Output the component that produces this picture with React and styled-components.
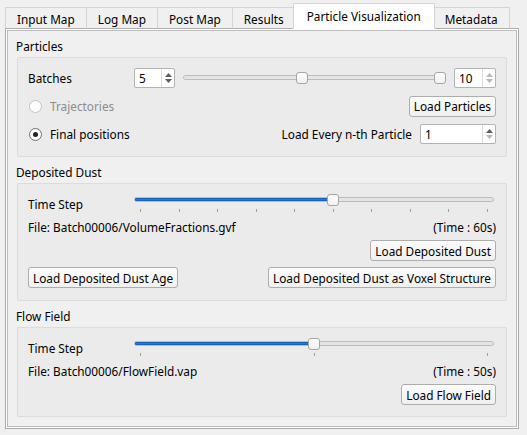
import styled, { createGlobalStyle } from "styled-components";

const GlobalStyle = createGlobalStyle`
  html, body {
    margin: 0;
    padding: 0;
    background: #f0f0f0;
  }
  body {
    font-family: "Noto Sans", "Open Sans", sans-serif;
    font-size: 11.8px;
    color: #000;
  }
`;

const tabs = [
  "Input Map",
  "Log Map",
  "Post Map",
  "Results",
  "Particle Visualization",
  "Metadata",
];

const Window = styled.div`
  width: 527px;
  height: 435px;
  box-sizing: border-box;
  padding: 3px 8px 6px 5px;
  display: flex;
  flex-direction: column;
  background: #f0f0f0;
`;

const TabBar = styled.div`
  display: flex;
  align-items: flex-end;
  height: 25px;
  position: relative;
  z-index: 1;
`;

const Tab = styled.div`
  box-sizing: border-box;
  height: ${({ $active }) => ($active ? 26 : 22)}px;
  margin: 0 ${({ $active }) => ($active ? -2 : -1)}px -1px
    ${({ $active }) => ($active ? -2 : 0)}px;
  padding: ${({ $active }) => ($active ? "0 13px 1px" : "1px 11px 0")};
  border: 1px solid #d4d4d4;
  border-bottom-color: ${({ $active }) => ($active ? "#fff" : "#adadad")};
  background: ${({ $active }) => ($active ? "#fff" : "#f0f0f0")};
  display: flex;
  align-items: center;
  white-space: nowrap;
  position: relative;
  z-index: ${({ $active }) => ($active ? 2 : 1)};
`;

const Pane = styled.div`
  flex: 1;
  display: flex;
  border: 1px solid #adadad;
  background: #fff;
  padding: 1px;
`;

const Frame = styled.div`
  flex: 1;
  display: flex;
  flex-direction: column;
  gap: 7px;
  border: 1px solid #bdbdbd;
  background: #f0f0f0;
  padding: 7px 9px 0;
`;

const Group = styled.section`
  display: flex;
  flex-direction: column;
`;

const GroupTitle = styled.div`
  height: 17px;
  line-height: 17px;
  margin: 0 0 2px -1px;
`;

const GroupFrame = styled.div`
  display: grid;
  grid-template-columns: 106px 1fr;
  row-gap: ${({ $rowGap }) => $rowGap}px;
  border: 1px solid #dcdcdc;
  border-radius: 2px;
  background: #ebebeb;
  padding: 10px 10px ${({ $bottom }) => $bottom}px;
`;

const Row = styled.div`
  grid-column: 1 / -1;
  display: flex;
  align-items: center;
  justify-content: ${({ $justify }) => $justify || "flex-start"};
  gap: 8px;
  height: ${({ $h }) => $h}px;
`;

const Label = styled.span`
  white-space: nowrap;
  align-self: center;
`;

const FieldLabel = styled.span`
  white-space: nowrap;
  align-self: start;
  margin-top: 2px;
`;

const SpinBox = styled.div`
  box-sizing: border-box;
  width: ${({ $width }) => $width}px;
  height: 20px;
  display: flex;
  flex: none;
  border: 1px solid #b3b3b3;
  border-radius: 2px;
  background: #fff;
`;

const SpinValue = styled.span`
  flex: 1;
  padding-left: 4px;
  line-height: 18px;
`;

const SpinArrows = styled.div`
  width: 12px;
  border-left: 1px solid #dcdcdc;
  display: flex;
  flex-direction: column;
  align-items: center;
  justify-content: center;
  gap: 2px;
`;

const Arrow = ({ down, dim }) => (
  <svg width="7" height="4" viewBox="0 0 7 4">
    <path
      d={down ? "M0 0h7L3.5 4z" : "M3.5 0L7 4H0z"}
      fill={dim ? "#b8b8b8" : "#5c5c5c"}
    />
  </svg>
);

const Spin = ({ width, value, upDim, downDim }) => (
  <SpinBox $width={width}>
    <SpinValue>{value}</SpinValue>
    <SpinArrows>
      <Arrow dim={upDim} />
      <Arrow down dim={downDim} />
    </SpinArrows>
  </SpinBox>
);

const SliderBox = styled.div`
  position: relative;
  flex: 1;
  align-self: stretch;
  margin-right: ${({ $right }) => $right || 0}px;
`;

const Groove = styled.div`
  box-sizing: border-box;
  height: 5px;
  margin-top: ${({ $top }) => $top}px;
  border: 1px solid #bcbcbc;
  border-radius: 3px;
  background: #e4e4e4;
  position: relative;
  overflow: hidden;
`;

const Fill = styled.div`
  position: absolute;
  left: 0;
  top: 0;
  bottom: 0;
  background: #1f7ad3;
  box-shadow: inset 0 0 0 1px #1665b4;
`;

const Handle = styled.div`
  position: absolute;
  top: ${({ $top }) => $top}px;
  box-sizing: border-box;
  width: 12px;
  height: 12px;
  border: 1px solid #a6a6a6;
  border-radius: 3px;
  background: linear-gradient(#fdfdfd, #f1f1f1);
`;

const Ticks = styled.div`
  display: flex;
  justify-content: space-between;
  padding: 0 6px;
  margin-top: 7px;
`;

const Tick = styled.span`
  width: 1px;
  height: 3px;
  background: #a0a0a0;
`;

const handleLeft = (f) => `calc((100% - 12px) * ${f})`;

const TimeSlider = ({ ticks, value }) => {
  const f = value / (ticks - 1);
  return (
    <SliderBox $right={2}>
      <Groove $top={3}>
        <Fill style={{ width: `calc((100% - 12px) * ${f} + 6px)` }} />
      </Groove>
      <Handle $top={0} style={{ left: handleLeft(f) }} />
      <Ticks>
        {Array.from({ length: ticks }, (_, i) => (
          <Tick key={i} />
        ))}
      </Ticks>
    </SliderBox>
  );
};

const RangeSlider = ({ low, high }) => (
  <SliderBox>
    <Groove $top={7} />
    <Handle $top={4} style={{ left: handleLeft(low) }} />
    <Handle $top={4} style={{ left: handleLeft(high) }} />
  </SliderBox>
);

const RadioItem = styled.label`
  display: flex;
  align-items: center;
  gap: 8px;
  margin-left: 1px;
  color: ${({ $disabled }) => ($disabled ? "#8b8b8b" : "#000")};
`;

const RadioCircle = styled.span`
  box-sizing: border-box;
  width: 13px;
  height: 13px;
  border-radius: 50%;
  border: 1px solid ${({ $disabled }) => ($disabled ? "#c2c2c2" : "#6e6e6e")};
  background: #fff;
  display: flex;
  align-items: center;
  justify-content: center;
  &::after {
    content: "";
    width: 5px;
    height: 5px;
    border-radius: 50%;
    background: #222;
    display: ${({ $checked }) => ($checked ? "block" : "none")};
  }
`;

const Radio = ({ label, checked, disabled }) => (
  <RadioItem $disabled={disabled}>
    <RadioCircle $checked={checked} $disabled={disabled} />
    {label}
  </RadioItem>
);

const Button = styled.button`
  box-sizing: border-box;
  height: 21px;
  padding: 0 4px;
  font: inherit;
  color: #000;
  white-space: nowrap;
  border: 1px solid #adadad;
  border-radius: 3px;
  background: linear-gradient(#fcfcfc, #f0f0f0);
`;

const Right = styled.div`
  display: flex;
  align-items: center;
  gap: 8px;
  margin-left: auto;
`;

const App = () => (
  <>
    <GlobalStyle />
    <Window>
      <TabBar>
        {tabs.map((t) => (
          <Tab key={t} $active={t === "Particle Visualization"}>
            {t}
          </Tab>
        ))}
      </TabBar>
      <Pane>
        <Frame>
          <Group>
            <GroupTitle>Particles</GroupTitle>
            <GroupFrame $rowGap={8} $bottom={12}>
              <Row $h={20}>
                <Label style={{ width: 98 }}>Batches</Label>
                <Spin width={41} value="5" />
                <RangeSlider low={0.45} high={1} />
                <Spin width={42} value="10" upDim downDim />
              </Row>
              <Row $h={20}>
                <Radio label="Trajectories" disabled />
                <Right>
                  <Button>Load Particles</Button>
                </Right>
              </Row>
              <Row $h={20}>
                <Radio label="Final positions" checked />
                <Right>
                  <Label>Load Every n-th Particle</Label>
                  <Spin width={76} value="1" downDim />
                </Right>
              </Row>
            </GroupFrame>
          </Group>

          <Group>
            <GroupTitle>Deposited Dust</GroupTitle>
            <GroupFrame $rowGap={6} $bottom={12}>
              <FieldLabel>Time Step</FieldLabel>
              <Row $h={20} style={{ gridColumn: "2" }}>
                <TimeSlider ticks={10} value={5} />
              </Row>
              <Row $h={14} $justify="space-between">
                <Label>File: Batch00006/VolumeFractions.gvf</Label>
                <Label>(Time : 60s)</Label>
              </Row>
              <Row $h={21}>
                <Right>
                  <Button>Load Deposited Dust</Button>
                </Right>
              </Row>
              <Row $h={21} $justify="space-between">
                <Button>Load Deposited Dust Age</Button>
                <Button>Load Deposited Dust as Voxel Structure</Button>
              </Row>
            </GroupFrame>
          </Group>

          <Group>
            <GroupTitle>Flow Field</GroupTitle>
            <GroupFrame $rowGap={6} $bottom={11}>
              <FieldLabel>Time Step</FieldLabel>
              <Row $h={20} style={{ gridColumn: "2" }}>
                <TimeSlider ticks={3} value={1} />
              </Row>
              <Row $h={14} $justify="space-between">
                <Label>File: Batch00006/FlowField.vap</Label>
                <Label>(Time : 50s)</Label>
              </Row>
              <Row $h={21}>
                <Right>
                  <Button>Load Flow Field</Button>
                </Right>
              </Row>
            </GroupFrame>
          </Group>
        </Frame>
      </Pane>
    </Window>
  </>
);

export default App;
